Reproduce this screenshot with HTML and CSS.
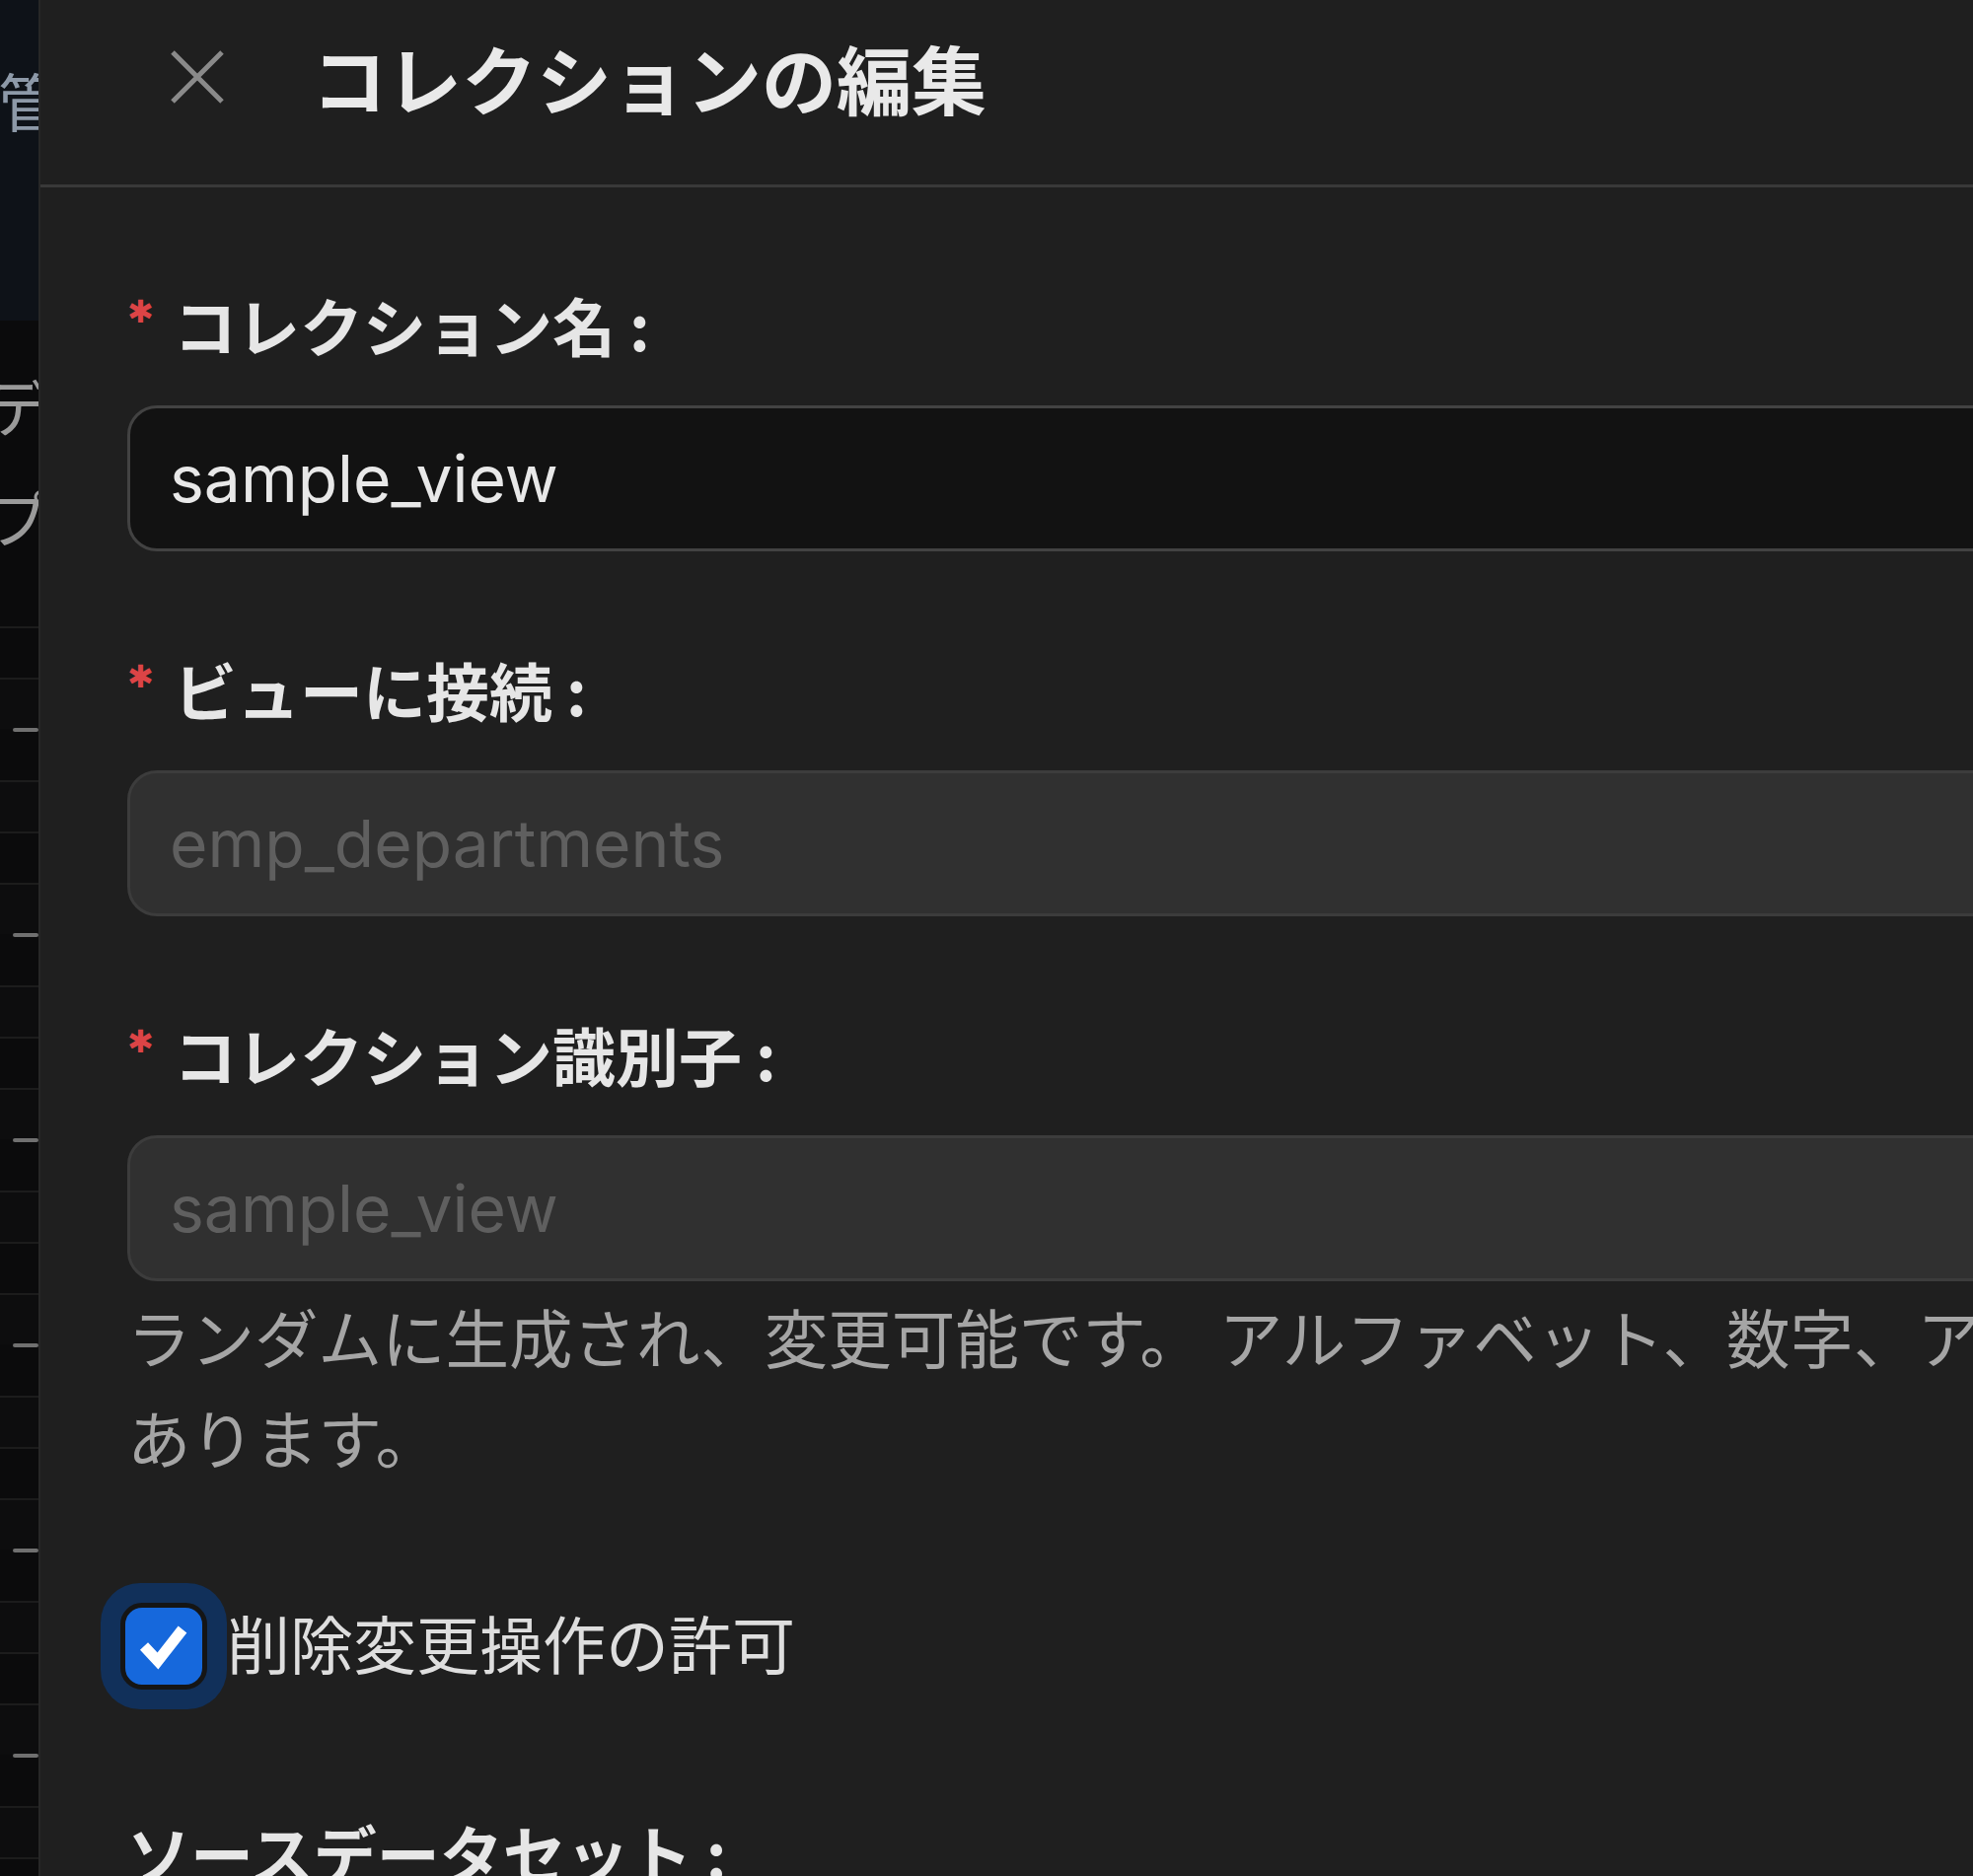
FILE: index.html
```html
<!DOCTYPE html>
<html lang="ja">
<head>
    <meta charset="UTF-8">
    <meta name="viewport" content="width=device-width, initial-scale=1.0">
    <title>コレクションの編集</title>
    <link rel="stylesheet" href="styles.css">
</head>
<body>
    <div class="page">
        <!-- 背後のページ(ドロワーで隠れている部分) -->
        <aside class="backdrop">
            <div class="bd-top"><span class="bd-char kan">管</span></div>
            <div class="bd-mid">
                <span class="bd-char">デ</span>
                <span class="bd-char pu">プ</span>
            </div>
            <div class="bd-rows">
                <div class="bd-row"></div><div class="bd-row"></div><div class="bd-row"></div><div class="bd-row"></div>
                <div class="bd-row"></div><div class="bd-row"></div><div class="bd-row"></div><div class="bd-row"></div>
                <div class="bd-row"></div><div class="bd-row"></div><div class="bd-row"></div><div class="bd-row"></div>
                <div class="bd-row"></div><div class="bd-row"></div><div class="bd-row"></div><div class="bd-row"></div>
                <div class="bd-row"></div><div class="bd-row"></div><div class="bd-row"></div><div class="bd-row"></div>
                <div class="bd-row"></div><div class="bd-row"></div><div class="bd-row"></div><div class="bd-row"></div>
                <div class="bd-row"></div>
            </div>
        </aside>

        <section class="drawer">
            <div class="drawer-head">
                <button class="close" type="button" aria-label="閉じる">
                    <svg width="60" height="60" viewBox="0 0 60 60">
                        <path d="M5 5 L55 55 M55 5 L5 55" stroke="#8a8a8a" stroke-width="5" fill="none"/>
                    </svg>
                </button>
                <h1 class="drawer-title">コレクションの編集</h1>
            </div>

            <form class="drawer-body">
                <div class="form-item">
                    <label class="form-label required">コレクション名</label>
                    <input class="form-input" type="text" value="sample_view">
                </div>

                <div class="form-item">
                    <label class="form-label required">ビューに接続</label>
                    <input class="form-input" type="text" value="emp_departments" disabled>
                </div>

                <div class="form-item has-help">
                    <label class="form-label required">コレクション識別子</label>
                    <input class="form-input" type="text" value="sample_view" disabled>
                    <div class="form-help">ランダムに生成され、変更可能です。&#x2005;アルファベット、数字、アンダースコアのみ使用でき、先頭は英字である必要が<br>あります。</div>
                </div>

                <div class="form-item check-item">
                    <span class="check-ring">
                        <span class="check-box">
                            <svg width="78" height="78" viewBox="0 0 78 78">
                                <polyline points="19,39 33,54 58,22" stroke="#fff" stroke-width="11" fill="none"/>
                            </svg>
                        </span>
                    </span>
                    <span class="check-label">削除変更操作の許可</span>
                </div>

                <div class="form-item">
                    <label class="form-label">ソースデータセット</label>
                </div>
            </form>
        </section>
    </div>
</body>
</html>
```

FILE: styles.css
```css
*{
    box-sizing: border-box;
}
html, body{
    margin: 0;
    padding: 0;
    height: 1902px;
    overflow: hidden;
    background-color: #1f1f1f;
}
body{
    font-family: "Noto Sans CJK JP", sans-serif;
}
.page{
    display: flex;
    height: 1902px;
}

/* 背後のページ */
.backdrop{
    width: 41px;
    flex-shrink: 0;
    background-color: #0b0b0c;
    border-right: 2px solid #272727;
    overflow: hidden;
}
    .bd-top{
        height: 325px;
        padding-top: 52px;
        background-color: #0e1218;
    }
    .bd-mid{
        height: 310px;
        padding-top: 30px;
    }
        .bd-char{
            display: block;
            font-size: 64px;
            line-height: 108px;
            color: #9a9a9a;
            margin-left: -14px;
            white-space: nowrap;
        }
        .pu{
            margin-top: 5px;
        }
        .kan{
            line-height: 96px;
            margin-left: -2px;
            color: #8d99a8;
        }
    .bd-row{
        height: 52px;
        border-top: 2px solid #1c1c1c;
        position: relative;
    }
    .bd-row:nth-child(even){
        background-color: #0d0d0e;
    }
    .bd-row:nth-child(4n+3){
        border-top-color: transparent;
    }
        .bd-row:nth-child(4n+3)::before{
            content: "";
            position: absolute;
            top: -3px;
            left: 13px;
            right: 0;
            height: 4px;
            border-radius: 2px;
            background-color: #707070;
        }

/* ドロワー */
.drawer{
    width: 2500px;
    flex-shrink: 0;
    background-color: #1f1f1f;
}
    .drawer-head{
        height: 190px;
        display: flex;
        align-items: center;
        padding: 0 0 32px 129px;
        border-bottom: 3px solid #393939;
    }
        .close{
            width: 60px;
            height: 60px;
            padding: 0;
            margin-right: 86px;
            border: 0;
            background: none;
        }
            .close svg{
                display: block;
            }
        .drawer-title{
            margin: 0;
            font-size: 76px;
            font-weight: 700;
            line-height: 1;
            color: #e9e9e9;
        }

    .drawer-body{
        padding: 90px 88px 0 88px;
    }
        .form-item{
            margin-bottom: 91px;
        }
        .form-item.has-help{
            margin-bottom: 98px;
        }
        .form-label{
            display: block;
            font-size: 64px;
            font-weight: 700;
            line-height: 96px;
            color: #e6e6e6;
            margin-bottom: 35px;
        }
        .form-label::after{
            content: ":";
            margin-left: 14px;
        }
        .required::before{
            content: "✱";
            display: inline-block;
            width: 47px;
            vertical-align: top;
            font-family: "DejaVu Sans", sans-serif;
            font-size: 32px;
            line-height: 72px;
            color: #dc4446;
        }
        .form-input{
            display: block;
            width: 100%;
            height: 148px;
            padding: 0 40px;
            font-family: Inter, "Noto Sans CJK JP", sans-serif;
            font-size: 66px;
            color: #e8e8e8;
            background-color: #121212;
            border: 3px solid #424242;
            border-radius: 30px;
            outline: none;
        }
        .form-input:disabled{
            color: #5f5f5f;
            -webkit-text-fill-color: #5f5f5f;
            background-color: #303030;
            border-color: #3c3c3c;
            opacity: 1;
        }
        .form-help{
            margin-top: 4px;
            font-size: 64.5px;
            line-height: 102px;
            color: #a5a5a5;
            white-space: nowrap;
        }

        .check-item{
            display: flex;
            align-items: center;
            margin-left: -27px;
            margin-bottom: 96px;
        }
            .check-ring{
                width: 128px;
                height: 128px;
                border-radius: 40px;
                background-color: #11305a;
                display: flex;
                align-items: center;
                justify-content: center;
            }
                .check-box{
                    width: 88px;
                    height: 88px;
                    border: 5px solid #151515;
                    border-radius: 22px;
                    background-color: #1668dc;
                    overflow: hidden;
                }
                    .check-box svg{
                        display: block;
                    }
            .check-label{
                font-size: 64px;
                line-height: 96px;
                padding-bottom: 10px;
                color: #dedede;
            }
```
